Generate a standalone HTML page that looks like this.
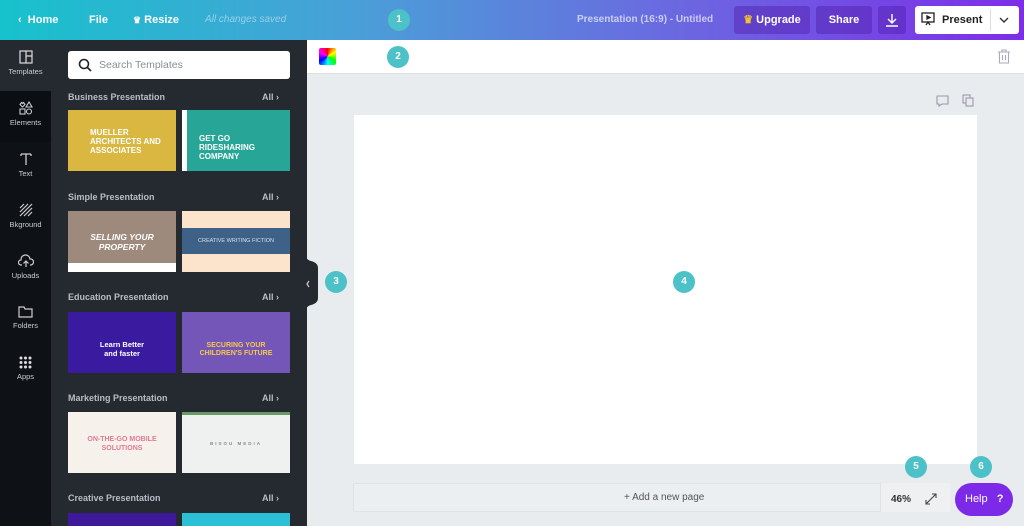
<!DOCTYPE html>
<html style="width:1024px;height:526px;overflow:hidden"><head><meta charset="utf-8"><style>
*{margin:0;padding:0;box-sizing:border-box}
body{width:1024px;height:526px;overflow:hidden;font-family:"Liberation Sans",sans-serif;background:#e9ecee;position:relative}
.a{position:absolute}
.top{left:0;top:0;width:1024px;height:40px;background:linear-gradient(90deg,#17c2cc 0%,#4a9fd8 35%,#6a6ae0 65%,#7d2ee8 100%)}
.tt{color:#fff;font-size:11px;font-weight:bold;top:14px}
.btn{top:6px;height:28px;background:rgba(80,30,170,.45);border-radius:3px;color:#fff;font-size:11px;font-weight:bold;line-height:28px;text-align:center}
.num{width:22px;height:22px;border-radius:50%;background:#4cc2c8;color:#fff;font-size:10px;font-weight:bold;text-align:center;line-height:22px}
.rail{left:0;top:40px;width:51px;height:486px;background:#0e1217}
.ri{left:0;width:51px;height:51px;color:#c9ccd1;font-size:7.5px;text-align:center}
.ri svg{display:block;margin:10px auto 3px}
.panel{left:51px;top:40px;width:256px;height:486px;background:#252a31}
.h{left:68px;color:#b8bcc3;font-size:9px;font-weight:bold}
.all{left:262px;color:#b8bcc3;font-size:9px;font-weight:bold}
.th{width:108px;height:61px;overflow:hidden;font-weight:bold;text-align:center}
</style></head><body>
<div class="a top"></div>
<div class="a tt" style="left:18px">&#8249;&nbsp; Home</div>
<div class="a tt" style="left:89px">File</div>
<div class="a tt" style="left:133px"><span style="color:#fff;font-size:9px">♛</span> Resize</div>
<div class="a" style="left:205px;top:14px;font-size:10px;font-style:italic;color:rgba(255,255,255,.45)">All changes saved</div>
<div class="a num" style="left:388px;top:9px">1</div>
<div class="a" style="left:577px;top:14px;font-size:10px;font-weight:bold;color:rgba(255,255,255,.65)">Presentation (16:9) - Untitled</div>
<div class="a btn" style="left:734px;width:76px"><span style="color:#f3c230">♛</span> Upgrade</div>
<div class="a btn" style="left:816px;width:56px">Share</div>
<div class="a btn" style="left:878px;width:28px"><svg width="14" height="14" viewBox="0 0 14 14" style="margin-top:7px" fill="none" stroke="#fff" stroke-width="1.4"><path d="M7 1v9M3 6l4 4 4-4M1 13h12"/></svg></div>
<div class="a" style="left:915px;top:6px;width:104px;height:28px;background:#fff;border-radius:3px"></div>
<div class="a" style="left:990px;top:9px;width:1px;height:22px;background:#ddd"></div>
<svg class="a" style="left:921px;top:12px" width="14" height="14" viewBox="0 0 14 14" fill="none" stroke="#222" stroke-width="1.3"><rect x="1" y="1" width="12" height="9"/><path d="M6 4l3 1.5-3 1.5z" fill="#222"/><path d="M5 13l2-3 2 3"/></svg>
<div class="a" style="left:942px;top:14px;font-size:11px;font-weight:bold;color:#222">Present</div>
<svg class="a" style="left:999px;top:17px" width="10" height="6" viewBox="0 0 10 6" fill="none" stroke="#333" stroke-width="1.4"><path d="M1 1l4 4 4-4"/></svg>

<div class="a" style="left:307px;top:40px;width:717px;height:34px;background:#fff;border-bottom:1px solid #dde1e4"></div>
<div class="a" style="left:319px;top:48px;width:17px;height:17px;background:conic-gradient(red,yellow,lime,cyan,blue,magenta,red);border-radius:2px"></div>
<div class="a num" style="left:387px;top:46px">2</div>
<svg class="a" style="left:997px;top:49px" width="14" height="15" viewBox="0 0 14 15" fill="none" stroke="#aab" stroke-width="1.1"><path d="M1 3h12M5 3V1h4v2M2.5 3v11h9V3M5.5 6v5M8.5 6v5"/></svg>
<svg class="a" style="left:936px;top:95px" width="13" height="12" viewBox="0 0 13 12" fill="none" stroke="#99a" stroke-width="1.1"><path d="M1 1h11v8H6l-3 2V9H1z"/></svg>
<svg class="a" style="left:962px;top:94px" width="12" height="13" viewBox="0 0 12 13" fill="none" stroke="#99a" stroke-width="1.1"><rect x="1" y="1" width="7" height="8"/><rect x="4" y="4" width="7" height="8" fill="#e9ecee"/></svg>
<div class="a" style="left:354px;top:115px;width:623px;height:349px;background:#fff"></div>
<div class="a num" style="left:673px;top:271px">4</div>
<div class="a num" style="left:325px;top:271px">3</div>
<div class="a" style="left:353px;top:483px;width:597px;height:29px;border:1px solid #dfe3e6;background:#eceff1;border-radius:2px"></div>
<div class="a" style="left:624px;top:492px;font-size:10px;color:#555">+ Add a new page</div>
<div class="a" style="left:880px;top:483px;width:70px;height:29px;background:#eef0f2;border-left:1px solid #dfe3e6"></div>
<div class="a" style="left:891px;top:494px;font-size:10px;font-weight:bold;color:#333">46%</div>
<svg class="a" style="left:925px;top:493px" width="12" height="12" viewBox="0 0 12 12" fill="none" stroke="#444" stroke-width="1.1"><path d="M1 11l10-10M7 1h4v4M1 7v4h4"/></svg>
<div class="a num" style="left:905px;top:456px">5</div>
<div class="a num" style="left:970px;top:456px">6</div>
<div class="a" style="left:955px;top:483px;width:58px;height:33px;border-radius:17px;background:#7d2ae8;color:#fff;font-size:11px;line-height:33px;padding-left:10px">Help <b style="margin-left:6px">?</b></div>

<div class="a rail"></div>
<div class="a panel"></div>
<div class="a ri" style="top:40px;background:#252a31"><svg width="14" height="14" viewBox="0 0 14 14" fill="none" stroke="#ddd" stroke-width="1.2"><rect x="1" y="1" width="12" height="12"/><path d="M7 1v12M7 6h6"/></svg>Templates</div>
<div class="a ri" style="top:91px;background:#0b0e12"><svg width="14" height="14" viewBox="0 0 14 14" fill="none" stroke="#ccc" stroke-width="1.1"><path d="M3.5 6L1 3.5 2.5 1.5 3.5 2.5 4.5 1.5 6 3.5zM10 1l3 5H7z"/><rect x="1" y="8" width="5" height="5"/><circle cx="10" cy="10.5" r="2.5"/></svg>Elements</div>
<div class="a ri" style="top:142px"><svg width="14" height="14" viewBox="0 0 14 14" fill="none" stroke="#ccc" stroke-width="1.3"><path d="M2 2h10M7 2v11M2 2v2M12 2v2"/></svg>Text</div>
<div class="a ri" style="top:193px"><svg width="14" height="14" viewBox="0 0 14 14" fill="none" stroke="#ccc" stroke-width="1.2"><path d="M1 5l4-4M1 9l8-8M1 13L13 1M5 13l8-8M9 13l4-4"/></svg>Bkground</div>
<div class="a ri" style="top:244px"><svg width="16" height="14" viewBox="0 0 16 14" fill="none" stroke="#ccc" stroke-width="1.2"><path d="M4 11H3a2.5 2.5 0 010-5 4.5 4.5 0 019-1 3 3 0 011 6h-1M8 13V7M5.5 9.5L8 7l2.5 2.5"/></svg>Uploads</div>
<div class="a ri" style="top:295px"><svg width="15" height="13" viewBox="0 0 15 13" fill="none" stroke="#ccc" stroke-width="1.2"><path d="M1 2h5l1 2h7v8H1z"/></svg>Folders</div>
<div class="a ri" style="top:346px"><svg width="13" height="13" viewBox="0 0 13 13" fill="#ddd"><circle cx="2" cy="2" r="1.5"/><circle cx="6.5" cy="2" r="1.5"/><circle cx="11" cy="2" r="1.5"/><circle cx="2" cy="6.5" r="1.5"/><circle cx="6.5" cy="6.5" r="1.5"/><circle cx="11" cy="6.5" r="1.5"/><circle cx="2" cy="11" r="1.5"/><circle cx="6.5" cy="11" r="1.5"/><circle cx="11" cy="11" r="1.5"/></svg>Apps</div>

<div class="a" style="left:68px;top:51px;width:222px;height:28px;background:#fff;border-radius:3px"></div>
<svg class="a" style="left:78px;top:58px" width="14" height="14" viewBox="0 0 14 14" fill="none" stroke="#222" stroke-width="1.6"><circle cx="6" cy="6" r="4.5"/><path d="M9.5 9.5L13 13"/></svg>
<div class="a" style="left:99px;top:59px;font-size:10.5px;color:#8a8f96">Search Templates</div>

<div class="a h" style="top:92px">Business Presentation</div><div class="a all" style="top:92px">All &#8250;</div>
<div class="a h" style="top:192px">Simple Presentation</div><div class="a all" style="top:192px">All &#8250;</div>
<div class="a h" style="top:292px">Education Presentation</div><div class="a all" style="top:292px">All &#8250;</div>
<div class="a h" style="top:393px">Marketing Presentation</div><div class="a all" style="top:393px">All &#8250;</div>
<div class="a h" style="top:493px">Creative Presentation</div><div class="a all" style="top:493px">All &#8250;</div>

<div class="a th" style="left:68px;top:110px;background:#d9b741;color:#fff;font-size:8px;text-align:left;padding:18px 0 0 22px;line-height:9px">MUELLER<br>ARCHITECTS AND<br>ASSOCIATES</div>
<div class="a th" style="left:182px;top:110px;background:#27a596;color:#fff;font-size:8px;text-align:left;padding:24px 0 0 12px;line-height:9px;border-left:5px solid #fff">GET GO<br>RIDESHARING<br>COMPANY</div>
<div class="a th" style="left:68px;top:211px;background:#9e8a7c;color:#fff;font-size:8.5px;font-style:italic;padding-top:21px;line-height:10px;border-bottom:9px solid #fff">SELLING YOUR<br>PROPERTY</div>
<div class="a th" style="left:182px;top:211px;background:#fbe3cc"><div style="margin-top:17px;height:26px;background:#3e6287;color:#dde;font-size:5.5px;font-weight:normal;line-height:26px">CREATIVE WRITING FICTION</div></div>
<div class="a th" style="left:68px;top:312px;background:#3a1a9e;color:#fff;font-size:7.5px;padding-top:28px;line-height:9px">Learn Better<br>and faster</div>
<div class="a th" style="left:182px;top:312px;background:#7456b8;color:#f5c94a;font-size:7px;padding-top:30px;line-height:8px">SECURING YOUR<br>CHILDREN'S FUTURE</div>
<div class="a th" style="left:68px;top:412px;background:#f7f1ec;color:#e27a90;font-size:7px;padding-top:23px;line-height:9px">ON-THE-GO MOBILE<br>SOLUTIONS</div>
<div class="a th" style="left:182px;top:412px;background:#eef1ef;border-top:3px solid #6a9a6a;color:#888;font-size:4.5px;padding-top:26px;letter-spacing:2px">BISOU MEDIA</div>
<div class="a th" style="left:68px;top:513px;height:13px;background:#3e1a9a"></div>
<div class="a th" style="left:182px;top:513px;height:13px;background:#2cc0d6"></div>

<svg class="a" style="left:305px;top:252px" width="14" height="62" viewBox="0 0 14 62"><path d="M0 0C0 5 2 8 6 9 10 10 13 12 13 16V46C13 50 10 52 6 53 2 54 0 57 0 62Z" fill="#252a31"/><path d="M4 29l-2 3 2 3" fill="none" stroke="#ccc" stroke-width="1.2"/></svg>
</body></html>
